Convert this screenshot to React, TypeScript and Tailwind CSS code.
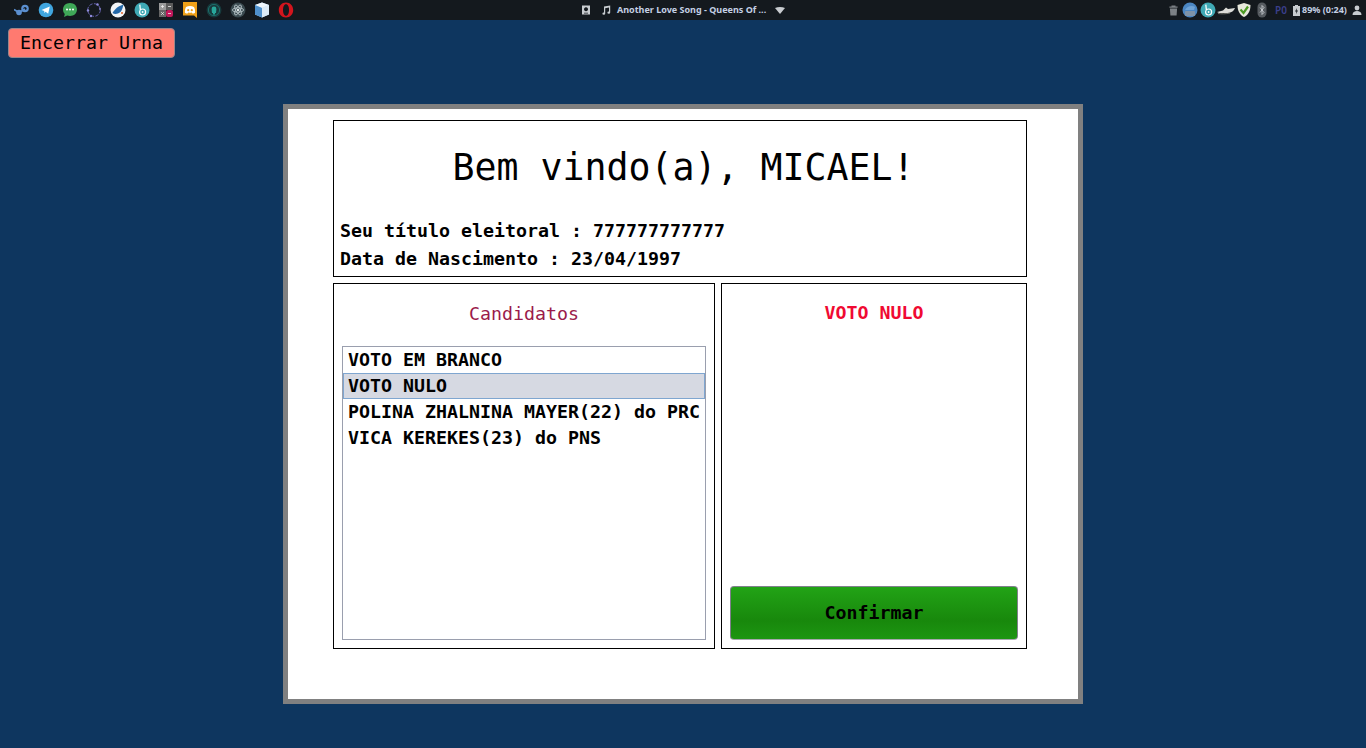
import React from "react";

const Ico = ({ children, w = 16 }: { children: React.ReactNode; w?: number }) => (
  <svg width={w} height="16" viewBox={`0 0 ${w} 16`} className="shrink-0">{children}</svg>
);

const BCircle = () => (
  <Ico>
    <circle cx="8" cy="8" r="7.5" fill="#3fa9b5" />
    <circle cx="8.6" cy="10" r="3" fill="none" stroke="#fff" strokeWidth="1.2" />
    <circle cx="8.6" cy="10" r="0.9" fill="#fff" />
    <path d="M5.8 2.6 L6.4 8" stroke="#fff" strokeWidth="1.3" />
  </Ico>
);

const LeftIcons = () => (
  <div className="flex items-center gap-2">
    {/* steam */}
    <Ico>
      <circle cx="11" cy="6.5" r="3.8" fill="#5b8fd0" />
      <circle cx="11" cy="6.5" r="1.6" fill="#14191e" />
      <circle cx="5" cy="10.5" r="2.8" fill="#5b8fd0" />
      <path d="M0 7.5 L5 10.5 L11 7" stroke="#5b8fd0" strokeWidth="1.8" fill="none" />
    </Ico>
    {/* telegram */}
    <Ico>
      <circle cx="8" cy="8" r="7.3" fill="#40a6e0" />
      <path d="M3.5 8 L11.8 4.5 L10.2 11.8 L7.6 9.8 L6.4 11 L6.2 9 Z" fill="#fff" />
    </Ico>
    {/* chat */}
    <Ico>
      <path d="M8 1 C12 1 15 3.8 15 7.5 C15 11.2 12 14 8 14 C7 14 6 13.8 5.2 13.5 L2 15 L2.8 12 C1.6 10.8 1 9.2 1 7.5 C1 3.8 4 1 8 1Z" fill="#3fa858" />
      <circle cx="5" cy="7.6" r="1" fill="#fff" />
      <circle cx="8" cy="7.6" r="1" fill="#fff" />
      <circle cx="11" cy="7.6" r="1" fill="#fff" />
    </Ico>
    {/* ring */}
    <Ico>
      <circle cx="8" cy="8" r="6.3" fill="none" stroke="#6a66b8" strokeWidth="0.9" strokeDasharray="3.4 1.4" />
      <circle cx="11.5" cy="2.5" r="1.2" fill="#8f8bdc" />
      <circle cx="2" cy="8.5" r="1.2" fill="#8f8bdc" />
      <circle cx="5" cy="14" r="1.2" fill="#8f8bdc" />
      <circle cx="14" cy="7" r="0.9" fill="#8f8bdc" />
    </Ico>
    {/* bird */}
    <Ico>
      <circle cx="8" cy="8" r="7.5" fill="#f2f4f6" />
      <path d="M2.5 11 C5 7 8 4 13.5 2.5 C12.5 6 12 10 8 11.5 C6 12.2 4 12 2.5 11Z" fill="#2468a8" />
      <circle cx="12" cy="11" r="1" fill="#e0652a" />
    </Ico>
    <BCircle />
    {/* calculator */}
    <Ico>
      <rect x="1" y="1" width="7" height="7" fill="#9a9a9a" />
      <rect x="8" y="1" width="7" height="7" fill="#5c5c5c" />
      <rect x="1" y="8" width="7" height="7" fill="#666666" />
      <rect x="8" y="8" width="7" height="7" rx="2" fill="#c2185b" />
      <path d="M3 4.5h3M4.5 3v3M10 4.5h3M3.2 10.2l2.6 2.6M5.8 10.2l-2.6 2.6M10 11.5h3" stroke="#eee" strokeWidth="0.8" />
    </Ico>
    {/* discord */}
    <Ico>
      <path d="M1 0 H15 V16 L12 13.5 H1 Z" fill="#f0a018" />
      <path d="M4 5 C6.5 3.8 9.5 3.8 12 5 C13 7 13.3 9 13 10.8 C12 11.4 11 11.6 10.4 11.6 L9.8 10.6 C8.6 10.9 7.4 10.9 6.2 10.6 L5.6 11.6 C5 11.6 4 11.4 3 10.8 C2.7 9 3 7 4 5Z" fill="#fff" />
      <circle cx="6.2" cy="8.2" r="1.1" fill="#f0a018" />
      <circle cx="9.8" cy="8.2" r="1.1" fill="#f0a018" />
    </Ico>
    {/* gitkraken */}
    <Ico>
      <circle cx="8" cy="8" r="7.5" fill="#17393c" />
      <circle cx="8" cy="8" r="5.6" fill="none" stroke="#1b6f6a" strokeWidth="1" />
      <path d="M5.6 7 a2.4 2.4 0 0 1 4.8 0 L10 11 H9 V12.6 H7 V11 H6 Z" fill="#28a79a" />
    </Ico>
    {/* atom */}
    <Ico>
      <circle cx="8" cy="8" r="7.5" fill="#3a4a50" />
      <ellipse cx="8" cy="8" rx="5.6" ry="2.2" fill="none" stroke="#c4d0d4" strokeWidth="0.8" />
      <ellipse cx="8" cy="8" rx="5.6" ry="2.2" fill="none" stroke="#c4d0d4" strokeWidth="0.8" transform="rotate(60 8 8)" />
      <ellipse cx="8" cy="8" rx="5.6" ry="2.2" fill="none" stroke="#c4d0d4" strokeWidth="0.8" transform="rotate(120 8 8)" />
      <circle cx="8" cy="8" r="1.2" fill="#dfe6e8" />
    </Ico>
    {/* cube */}
    <Ico>
      <path d="M8 0.5 L15 3 V12.5 L8 15.5 L1 12.5 V3 Z" fill="#a8cdec" />
      <path d="M8 6 L15 3 V12.5 L8 15.5 Z" fill="#dcebf7" />
      <path d="M8 0.5 L15 3 L8 6 L1 3 Z" fill="#eef6fc" />
      <path d="M1 3 L8 6 V15.5 L1 12.5 Z" fill="#4f90cc" />
    </Ico>
    {/* opera */}
    <Ico>
      <path fillRule="evenodd" d="M8 0.5 C12.2 0.5 15.2 3.8 15.2 8 C15.2 12.2 12.2 15.5 8 15.5 C3.8 15.5 0.8 12.2 0.8 8 C0.8 3.8 3.8 0.5 8 0.5Z M8 2.2 C6 2.2 5 4.8 5 8 C5 11.2 6 13.8 8 13.8 C10 13.8 11 11.2 11 8 C11 4.8 10 2.2 8 2.2Z" fill="#d3151d" />
    </Ico>
  </div>
);

const CenterGroup = () => (
  <div className="flex items-center">
    <svg width="10" height="10" viewBox="0 0 10 10" className="shrink-0">
      <path fillRule="evenodd" d="M1 0.5 H9 V9.5 H1Z M5 2.2 a2 2 0 1 0 0.01 0Z M3 7.8 h4 v0.8 h-4Z" fill="#c8ccd0" />
    </svg>
    <svg width="10" height="10" viewBox="0 0 10 10" className="ml-[10px] shrink-0">
      <path d="M3 1.5 L9.2 0.5 V7.5 A1.4 1.2 0 1 1 8 6.4 V2.6 L4.2 3.2 V8.5 A1.4 1.2 0 1 1 3 7.4 Z" fill="#c8ccd0" />
    </svg>
    <span className="ml-[6px] w-[148px] whitespace-nowrap text-[9px] leading-[20px] font-bold text-[#c4d0e4] [font-family:'Noto_Sans',sans-serif]">
      Another Love Song - Queens Of ...
    </span>
    <svg width="10" height="7" viewBox="0 0 10 7" className="ml-[10px] shrink-0">
      <path d="M0 1 C3 -0.3 7 -0.3 10 1 L5 7 Z" fill="#c8ccd0" />
    </svg>
  </div>
);

const RightGroup = () => (
  <div className="flex items-center">
    <svg width="9" height="11" viewBox="0 0 9 11" className="shrink-0">
      <path d="M2.5 0.6 H6.5 V1.4 H8.6 V2.8 H0.4 V1.4 H2.5Z M0.9 3.4 H8.1 L7.6 10.6 H1.4Z" fill="#7c8186" />
    </svg>
    <span className="ml-[4px] flex">
      <Ico>
        <circle cx="8" cy="8" r="7.5" fill="#4b86c2" />
        <path d="M3 8 C5 4 10 3 13 5 L12 8Z" fill="#6fa3d6" />
        <rect x="3" y="9" width="10" height="5" rx="1" fill="#7f93a8" />
      </Ico>
    </span>
    <span className="ml-[2px] flex">
      <BCircle />
    </span>
    <span className="ml-[1px] flex">
      <Ico w={18}>
        <path d="M0 10 L6 8.5 L9 5.5 L11 7 L18 6 C17 9 14 11 9 11 C6 11 2 11.5 0 10Z" fill="#dcdcd8" />
        <path d="M1 11.5 C4 12 9 12 13 11" stroke="#8a8a80" strokeWidth="0.8" fill="none" />
      </Ico>
    </span>
    <span className="ml-[1px] flex">
      <Ico>
        <path d="M8 1 L14.5 3 C14.5 9 12 13 8 15 C4 13 1.5 9 1.5 3 Z" fill="#e8e8dc" />
        <path d="M4.5 7.5 L7.5 11 L12 4.5" stroke="#4c9a24" strokeWidth="2.2" fill="none" />
      </Ico>
    </span>
    <span className="ml-[2px] flex">
      <Ico>
        <rect x="3.5" y="0.5" width="9" height="15" rx="4.5" fill="#565b60" />
        <path d="M6 5.5 L10 10.5 L8 12.5 V3.5 L10 5.5 L6 10.5" stroke="#d4d8dc" strokeWidth="0.8" fill="none" />
      </Ico>
    </span>
    <span className="ml-[5px] w-[12px] text-[10px] leading-[20px] font-semibold text-[#3b3f8c] [font-family:'Noto_Sans',sans-serif]">
      P0
    </span>
    <svg width="7" height="11" viewBox="0 0 7 11" className="ml-[6px] shrink-0">
      <path d="M2 0 H5 V1 H7 V11 H0 V1 H2Z" fill="#c8ccd0" />
      <path d="M4 3 L2 6.4 H3.4 L3 9 L5 5.4 H3.6Z" fill="#14191e" />
    </svg>
    <span className="ml-[2px] w-[45px] whitespace-nowrap text-[9px] leading-[20px] font-bold text-[#c4d0e4] [font-family:'Noto_Sans',sans-serif]">
      89% (0:24)
    </span>
    <svg width="10" height="10" viewBox="0 0 10 10" className="ml-[5px] shrink-0">
      <circle cx="5" cy="3" r="2.4" fill="#c8ccd0" />
      <path d="M0.5 10 C0.5 7 2.5 6 5 6 C7.5 6 9.5 7 9.5 10Z" fill="#c8ccd0" />
    </svg>
  </div>
);

const mono = "[font-family:'DejaVu_Sans_Mono',monospace]";

export default function App() {
  return (
    <div className={`flex h-[748px] w-[1366px] flex-col overflow-hidden bg-[#0e365f] ${mono}`}>
      <header className="relative flex h-5 shrink-0 items-center justify-between bg-[#14191e] pl-[14px] pr-[4px]">
        <LeftIcons />
        <div className="absolute left-[581px] top-0 flex h-5 items-center">
          <CenterGroup />
        </div>
        <RightGroup />
      </header>

      <div className="flex shrink-0 pl-2 pt-2">
        <button className="h-[30px] w-[167px] rounded-[4px] border border-[#9a868a] bg-[#ff7a70] text-[18.27px] leading-none text-black">
          Encerrar Urna
        </button>
      </div>

      <div className="mt-[46px] flex justify-center">
        <main className="h-[600px] w-[800px] border-[5px] border-[#808080] bg-white pl-[45px] pr-[51px] pt-[11px]">
          <section className="flex h-[157px] flex-col border border-black px-[6px]">
            <h1 className="mt-[26px] pl-[7px] text-center text-[36.54px] leading-[42px] font-normal text-black">
              Bem vindo(a), MICAEL!
            </h1>
            <p className="mt-[28px] text-[18.27px] leading-[28px] font-bold text-black">
              Seu título eleitoral : 777777777777
            </p>
            <p className="text-[18.27px] leading-[28px] font-bold text-black">
              Data de Nascimento : 23/04/1997
            </p>
          </section>

          <div className="mt-[6px] flex gap-[6px]">
            <section className="flex h-[366px] w-[382px] flex-col border border-black px-2">
              <h2 className="mt-[19px] text-center text-[18.27px] leading-[22px] font-normal text-[#9b1b4b]">
                Candidatos
              </h2>
              <ul className="mt-[21px] h-[294px] border border-[#9a9fae] text-[18.27px] leading-[26px] font-bold text-black">
                <li className="h-[26px] whitespace-nowrap pl-[5px]">VOTO EM BRANCO</li>
                <li className="h-[26px] whitespace-nowrap border border-[#7fa6d0] bg-[#d6d9e2] pl-[4px] leading-[24px]">VOTO NULO</li>
                <li className="h-[26px] whitespace-nowrap pl-[5px]">POLINA ZHALNINA MAYER(22) do PRC</li>
                <li className="h-[26px] whitespace-nowrap pl-[5px]">VICA KEREKES(23) do PNS</li>
              </ul>
            </section>

            <section className="flex h-[366px] w-[306px] flex-col items-center border border-black px-2 pb-2">
              <h2 className="mt-[18px] text-[18.27px] leading-[22px] font-bold text-[#f00a32]">VOTO NULO</h2>
              <button className="mt-auto h-[54px] w-[288px] rounded-[4px] border border-[#80808c] border-b-[#a8a8b0] bg-[linear-gradient(#22a316,#18880c_65%,#1d9612)] text-[18.27px] font-bold text-black">
                Confirmar
              </button>
            </section>
          </div>
        </main>
      </div>
    </div>
  );
}
